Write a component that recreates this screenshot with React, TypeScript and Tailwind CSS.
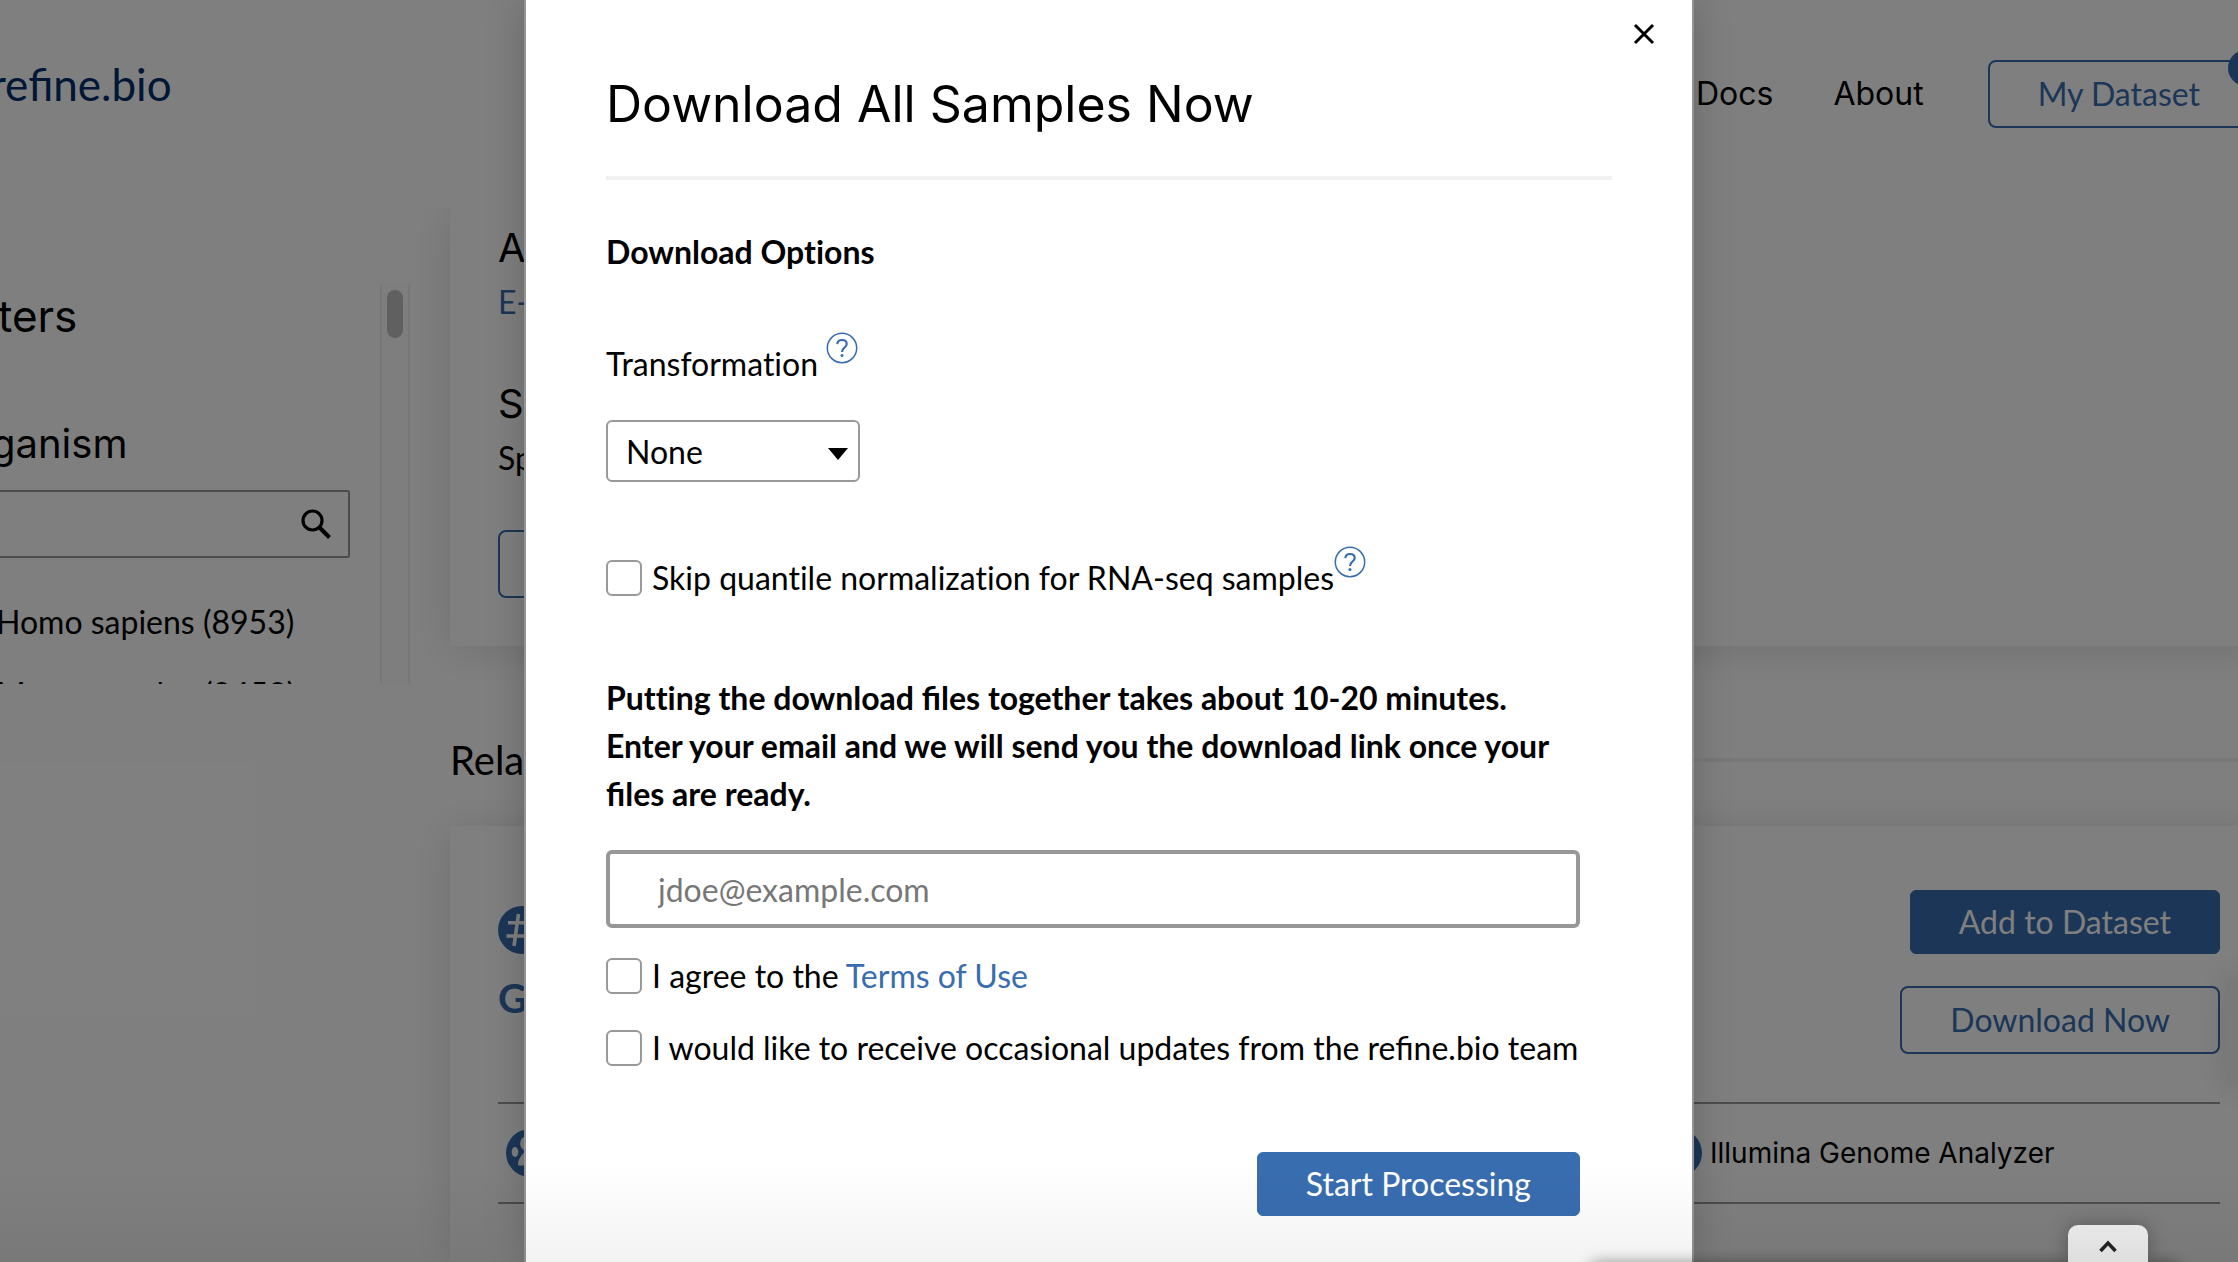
import type { ReactNode } from 'react';

const BODY = "font-['Lato',sans-serif] text-[32px] leading-[48px]";
const OUTLINE_BUTTON =
  'h-[68px] shrink-0 rounded-lg border-2 border-[#386db0] px-12 text-[#386db0] whitespace-nowrap';
const SOLID_BUTTON =
  'h-16 shrink-0 rounded-md border border-[#386db0] bg-[#386db0] px-12 text-white whitespace-nowrap';

function HelpButton({ label }: { label: string }) {
  return (
    <button type="button" aria-label={label} className="-mt-2 size-8 shrink-0 self-start text-[#386db0]">
      <svg viewBox="0 0 32 32" className="size-8" fill="none" stroke="currentColor">
        <circle cx="16" cy="16" r="14.7" strokeWidth="1.5" />
        <path d="M11.3 12.2c.2-2.7 2-4.2 4.7-4.2 2.8 0 4.7 1.6 4.7 3.9 0 1.8-1 2.8-2.5 4-1.5 1.1-2.1 1.9-2.1 4" strokeWidth="2.2" />
        <circle cx="16" cy="23.4" r="1.5" fill="currentColor" stroke="none" />
      </svg>
    </button>
  );
}

function CheckRow({ id, children }: { id: string; children: ReactNode }) {
  return (
    <div className="flex items-center">
      <input
        id={id}
        type="checkbox"
        className="mr-2.5 size-9 shrink-0 appearance-none rounded-md border-2 border-[#999999] bg-white checked:bg-[#386db0]"
      />
      {children}
    </div>
  );
}

function HashIcon() {
  return (
    <svg viewBox="0 0 48 48" className="size-12">
      <circle cx="24" cy="24" r="24" fill="#386db0" />
      <path d="M20.5 8 16 40M33.5 8 29 40M10 16.8h30M8.5 30h30" fill="none" stroke="#fff" strokeWidth="3.6" />
    </svg>
  );
}

function OrganismIcon() {
  return (
    <svg viewBox="0 0 48 48" className="size-12 shrink-0">
      <circle cx="24" cy="24" r="24" fill="#386db0" />
      <g fill="#fff">
        <ellipse cx="9" cy="23" rx="3.3" ry="5" />
        <ellipse cx="18.5" cy="14.5" rx="4.3" ry="6.5" />
        <ellipse cx="29.5" cy="14.5" rx="4.3" ry="6.5" />
        <ellipse cx="39" cy="23" rx="3.3" ry="5" />
        <path d="M24 21c-5 0-12 8-12 14 0 3 4 1 12 1s12 2 12-1c0-6-7-14-12-14Z" />
      </g>
    </svg>
  );
}

function PlatformIcon() {
  return (
    <svg viewBox="0 0 48 48" className="size-12 shrink-0">
      <circle cx="24" cy="24" r="24" fill="#386db0" />
      <path d="M14 14h20v20H14z" fill="none" stroke="#fff" strokeWidth="3" />
    </svg>
  );
}

function Header() {
  return (
    <header className="flex h-[208px] shrink-0 items-start justify-between">
      <a href="#" className="-ml-2.5 mt-[58px] text-[44px] leading-[52px] text-[#002f6c]">
        refine.bio
      </a>
      <nav className="-mr-3 flex items-center pt-[60px] font-['Inter',sans-serif]">
        <a href="#docs" className="mr-[60px]">Docs</a>
        <a href="#about" className="mr-16">About</a>
        <button type="button" className={`relative font-['Lato',sans-serif] ${OUTLINE_BUTTON}`}>
          My Dataset
          <span className="absolute -top-3 -right-4 size-9 rounded-full bg-[#386db0]" />
        </button>
      </nav>
    </header>
  );
}

function Filters() {
  return (
    <aside className="-ml-[60px] mt-[76px] flex h-[400px] w-[470px] shrink-0 overflow-hidden">
      <div className="min-w-0 flex-1 pr-[30px]">
        <h2 className="mt-1.5 ml-2.5 font-['Inter',sans-serif] text-[44px] leading-[52px]">Filters</h2>
        <h3 className="mt-[78px] ml-1.5 font-['Inter',sans-serif] text-[40px] leading-[48px]">Organism</h3>
        <div className="mt-[22px] flex h-[68px] items-center rounded-xs border-2 border-[#999999] pr-4">
          <input aria-label="Search organisms" className="h-full min-w-0 flex-1 bg-transparent px-4 outline-none" />
          <svg viewBox="0 0 32 32" className="size-8" fill="none" stroke="#000">
            <circle cx="12.5" cy="12.5" r="9.5" strokeWidth="3.2" />
            <path d="m19.5 19.5 10 10" strokeWidth="4" />
          </svg>
        </div>
        <div className="mt-10 flex flex-col gap-6">
          <CheckRow id="homo-sapiens">
            <label htmlFor="homo-sapiens" className="ml-2.5 whitespace-nowrap">Homo sapiens (8953)</label>
          </CheckRow>
          <CheckRow id="mus-musculus">
            <label htmlFor="mus-musculus" className="ml-2.5 whitespace-nowrap">Mus musculus (9453)</label>
          </CheckRow>
        </div>
      </div>
      <div className="w-[30px] border-x-2 border-[#eeeeee] bg-[#fdfdfd] pt-1.5">
        <div className="mx-auto h-12 w-4 rounded-full bg-[#c1c1c1]" />
      </div>
    </aside>
  );
}

function Results() {
  return (
    <main className="-mr-[30px] ml-10 flex min-w-0 flex-1 flex-col">
      <section className="bg-white px-12 pt-4 pb-12 shadow-[0_4px_40px_rgba(0,0,0,0.12)]">
        <h3 className="font-['Inter',sans-serif] text-[40px] leading-[48px]">A</h3>
        <a href="#accession" className="mt-1.5 block text-[#386db0]">E-</a>
        <h3 className="mt-[54px] font-['Inter',sans-serif] text-[40px] leading-[48px]">Sa</h3>
        <p className="mt-1.5">Sp</p>
        <button type="button" aria-label="Download" className={`mt-12 block w-64 ${OUTLINE_BUTTON}`} />
      </section>

      <div className="mt-[86px] flex items-center gap-8">
        <h2 className="text-[40px] leading-[56px]">Rela</h2>
        <div className="h-1 flex-1 bg-[#f2f2f2]" />
      </div>

      <section className="mt-[38px] flex-1 bg-white px-12 pt-16 shadow-[0_4px_40px_rgba(0,0,0,0.12)]">
        <div className="flex justify-between">
          <div className="pt-4">
            <HashIcon />
            <a href="#series" className="mt-3.5 block text-[40px] leading-[60px] font-bold text-[#386db0]">G</a>
          </div>
          <div className="flex flex-col items-end gap-8">
            <button type="button" className={SOLID_BUTTON}>Add to Dataset</button>
            <button type="button" className={OUTLINE_BUTTON}>Download Now</button>
          </div>
        </div>
        <div className="mt-12 grid h-[102px] grid-cols-3 items-center gap-2 border-y-2 border-[#999999] pl-2 font-['Inter',sans-serif] text-[28px]">
          <OrganismIcon />
          <span />
          <div className="flex items-center gap-2">
            <PlatformIcon />
            <span className="whitespace-nowrap">Illumina Genome Analyzer</span>
          </div>
        </div>
      </section>
    </main>
  );
}

function DownloadDialog() {
  return (
    <div
      role="dialog"
      aria-labelledby="dialog-title"
      className="relative min-h-full w-full max-w-[1170px] border-x-2 border-[#949494] bg-white px-20 pt-[74px] shadow-[0_0_36px_rgba(0,0,0,0.2)]"
    >
      <button type="button" aria-label="Close" className="absolute top-[22px] right-9 size-6">
        <svg viewBox="0 0 24 24" className="size-6" fill="none" stroke="#000" strokeWidth="3">
          <path d="m3 3 18 18M21 3 3 21" />
        </svg>
      </button>
      <h1 id="dialog-title" className="font-['Inter',sans-serif] text-[50px] leading-[60px]">
        Download All Samples Now
      </h1>
      <hr className="mt-[42px] h-1 border-0 bg-[#f1f1f1]" />
      <form className="pr-8" onSubmit={(e) => e.preventDefault()}>
        <h2 className="mt-12 font-bold [font-variant-ligatures:none]">Download Options</h2>
        <div className="mt-16 flex gap-2 [font-variant-ligatures:none]">
          <label htmlFor="transformation">Transformation</label>
          <HelpButton label="About transformation" />
        </div>
        <div className="relative mt-8 w-[254px]">
          <select
            id="transformation"
            className="block h-[62px] w-full appearance-none rounded-md border-2 border-[#999999] bg-white pt-0.5 pl-[18px]"
          >
            <option>None</option>
          </select>
          <svg viewBox="0 0 20 12" className="pointer-events-none absolute top-7 right-3 h-3 w-5">
            <path d="M0 0h20L10 12z" />
          </svg>
        </div>
        <div className="mt-[72px] flex [font-variant-ligatures:none]">
          <CheckRow id="skip">
            <label htmlFor="skip">Skip quantile normalization for RNA-seq samples</label>
          </CheckRow>
          <HelpButton label="About quantile normalization" />
        </div>
        <label htmlFor="email" className="mt-[72px] block font-bold">
          <span className="[font-variant-ligatures:none]">Putting</span> the download files together takes about
          10-20 minutes. Enter your email and we will send you the download link once your files are ready.
        </label>
        <input
          id="email"
          type="email"
          placeholder="jdoe@example.com"
          className="mt-8 block h-[78px] w-full rounded-md border-4 border-[#979797] px-12 placeholder:text-[#777777]"
        />
        <div className="mt-6 flex flex-col gap-6">
          <CheckRow id="terms">
            <label htmlFor="terms">
              I agree to the{' '}
              <a href="#terms" className="text-[#386db0]">
                Terms of Use
              </a>
            </label>
          </CheckRow>
          <CheckRow id="updates">
            <label htmlFor="updates">I would like to receive occasional updates from the refine.bio team</label>
          </CheckRow>
        </div>
        <div className="mt-20 flex justify-end">
          <button type="submit" className={SOLID_BUTTON}>Start Processing</button>
        </div>
      </form>
    </div>
  );
}

export default function App() {
  return (
    <div className={`relative flex h-screen flex-col overflow-hidden bg-white text-black ${BODY}`}>
      <Header />
      <div className="flex min-h-0 flex-1 overflow-hidden">
        <Filters />
        <Results />
      </div>
      <div className="absolute top-[978px] -right-9 h-[108px] w-12 rounded-lg bg-[#f2f2f2] shadow-[0_0_36px_rgba(0,0,0,0.12)]" />

      <div className="absolute inset-0 flex justify-center bg-black/50 pr-5">
        <DownloadDialog />
      </div>

      <div className="pointer-events-none absolute inset-x-0 bottom-0 h-24 bg-linear-to-b from-transparent to-black/5" />
      <div className="absolute -bottom-3 right-[58px] h-3 w-[590px] rounded-t-lg bg-[#aaaaaa] shadow-[0_0_14px_rgba(0,0,0,0.4)]" />
      <button
        type="button"
        aria-label="Expand"
        className="absolute right-[90px] bottom-0 flex h-[37px] w-20 justify-center rounded-t-[10px] bg-linear-to-b from-[#e8e8e8] to-[#dedede] pt-3.5 shadow-[0_0_20px_rgba(0,0,0,0.3)]"
      >
        <svg viewBox="0 0 18 14" className="h-3.5 w-[18px]" fill="none" stroke="#222" strokeWidth="3.5">
          <path d="m1.5 12 7.5-8 7.5 8" />
        </svg>
      </button>
    </div>
  );
}
